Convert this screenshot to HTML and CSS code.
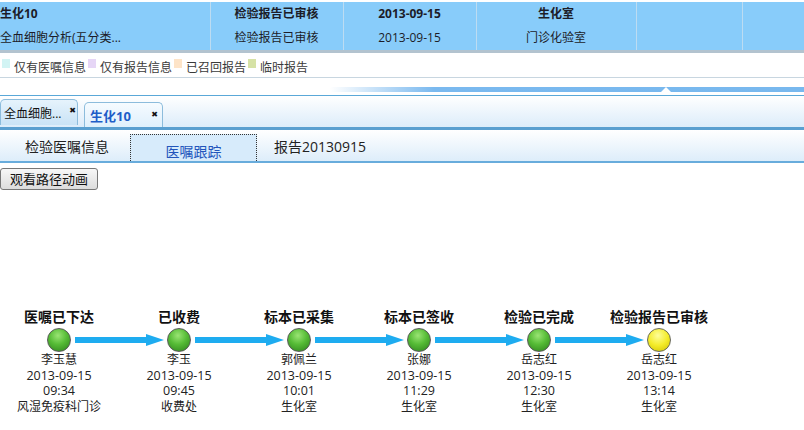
FILE: index.html
```html
<!DOCTYPE html>
<html lang="zh-CN">
<head>
<meta charset="utf-8">
<title>医嘱跟踪</title>
<link rel="stylesheet" href="styles.css">
</head>
<body>
<table class="rec">
  <colgroup>
    <col class="c1"><col class="c2"><col class="c3"><col class="c4"><col class="c5"><col class="c6">
  </colgroup>
  <tr class="bold">
    <td class="left">生化10</td><td>检验报告已审核</td><td>2013-09-15</td><td>生化室</td><td></td><td></td>
  </tr>
  <tr>
    <td class="left">全血细胞分析(五分类...</td><td>检验报告已审核</td><td>2013-09-15</td><td>门诊化验室</td><td></td><td></td>
  </tr>
</table>

<div class="legend">
  <span class="sw sw-cyan"></span><span class="lg">仅有医嘱信息</span>
  <span class="sw sw-lav"></span><span class="lg">仅有报告信息</span>
  <span class="sw sw-peach"></span><span class="lg">已召回报告</span>
  <span class="sw sw-green"></span><span class="lg">临时报告</span>
</div>

<div class="splitter">
  <div class="sbar"><span class="handle"></span></div>
</div>

<div class="tabs">
  <div class="tab"><span>全血细胞...</span><span class="x x-top">✖</span></div>
  <div class="tab active"><span>生化10</span><span class="x">✖</span></div>
</div>

<div class="subtabs">
  <div class="subtab">检验医嘱信息</div>
  <div class="subtab sel">医嘱跟踪</div>
  <div class="subtab">报告20130915</div>
</div>

<button class="btn" type="button">观看路径动画</button>

<div class="flow">
  <div class="titles">
    <div>医嘱已下达</div><div>已收费</div><div>标本已采集</div><div>标本已签收</div><div>检验已完成</div><div>检验报告已审核</div>
  </div>
  <div class="track">
    <span class="dot"></span>
    <svg class="arrow" width="89" height="12" viewBox="0 0 89 12"><rect x="0" y="3" width="73" height="6"/><polygon points="71,0 89,6 71,12"/></svg>
    <span class="dot"></span>
    <svg class="arrow" width="89" height="12" viewBox="0 0 89 12"><rect x="0" y="3" width="73" height="6"/><polygon points="71,0 89,6 71,12"/></svg>
    <span class="dot"></span>
    <svg class="arrow" width="89" height="12" viewBox="0 0 89 12"><rect x="0" y="3" width="73" height="6"/><polygon points="71,0 89,6 71,12"/></svg>
    <span class="dot"></span>
    <svg class="arrow" width="89" height="12" viewBox="0 0 89 12"><rect x="0" y="3" width="73" height="6"/><polygon points="71,0 89,6 71,12"/></svg>
    <span class="dot"></span>
    <svg class="arrow" width="89" height="12" viewBox="0 0 89 12"><rect x="0" y="3" width="73" height="6"/><polygon points="71,0 89,6 71,12"/></svg>
    <span class="dot yellow"></span>
  </div>
  <div class="infos">
    <div><div>李玉慧</div><div class="num">2013-09-15</div><div class="num">09:34</div><div>风湿免疫科门诊</div></div>
    <div><div>李玉</div><div class="num">2013-09-15</div><div class="num">09:45</div><div>收费处</div></div>
    <div><div>郭佩兰</div><div class="num">2013-09-15</div><div class="num">10:01</div><div>生化室</div></div>
    <div><div>张娜</div><div class="num">2013-09-15</div><div class="num">11:29</div><div>生化室</div></div>
    <div><div>岳志红</div><div class="num">2013-09-15</div><div class="num">12:30</div><div>生化室</div></div>
    <div><div>岳志红</div><div class="num">2013-09-15</div><div class="num">13:14</div><div>生化室</div></div>
  </div>
</div>
</body>
</html>
```

FILE: styles.css
```css
html, body {
  margin: 0;
  padding: 0;
  background: #fff;
}
body {
  width: 804px;
  height: 430px;
  overflow: hidden;
  font-family: "Open Sans", "Noto Sans CJK SC", sans-serif;
  font-size: 12px;
  color: #1e1e1e;
}

/* top record table */
.rec {
  border-collapse: collapse;
  table-layout: fixed;
  width: 804px;
  margin-top: 2px;
  background: #88ccfa;
  border-bottom: 3px solid #b3c3cf;
}
.c1 { width: 210px; }
.c2 { width: 133px; }
.c3 { width: 133px; }
.c4 { width: 160px; }
.c5 { width: 106px; }
.c6 { width: 62px; }
.rec td {
  height: 24px;
  padding: 0;
  line-height: 24px;
  text-align: center;
  white-space: nowrap;
  overflow: hidden;
  border-left: 1px solid #bcdcf2;
  color: #1c1c28;
}
.rec td.left {
  text-align: left;
  border-left: none;
}
.rec tr.bold td { font-weight: bold; }

/* legend */
.legend {
  height: 25px;
  box-sizing: border-box;
  padding: 7px 0 0 2px;
  border-bottom: 1px solid #c8d6e0;
  display: flex;
  align-items: flex-start;
}
.sw {
  width: 8px;
  height: 9px;
  margin: -1px 4px 0 0;
}
.sw-cyan { background: #d2f4f4; }
.sw-lav { background: #e6d6f6; }
.sw-peach { background: #fde4c8; }
.sw-green { background: #d6e2a6; }
.lg {
  line-height: 16px;
  color: #3a3a3a;
  margin-right: 2px;
}

/* splitter */
.splitter {
  height: 17px;
  padding-top: 9px;
  box-sizing: border-box;
}
.sbar {
  margin-left: 330px;
  height: 5px;
  background: linear-gradient(to right, rgba(120,184,240,0), #7ab9ef 22%, #78b8ee);
  display: flex;
  align-items: flex-end;
}
.handle {
  margin-left: 331px;
  width: 0;
  height: 0;
  border-left: 5px solid transparent;
  border-right: 5px solid transparent;
  border-bottom: 5px solid #fff;
}

/* outer tabs */
.tabs {
  height: 31px;
  border-top: 1px solid #5aa8d8;
  border-bottom: 3px solid #5a9fd0;
  background: linear-gradient(#ffffff, #dcecfa);
  display: flex;
  align-items: flex-end;
  gap: 6px;
}
.tab {
  width: 78px;
  height: 26px;
  margin-bottom: 2px;
  box-sizing: border-box;
  border: 1px solid #8cbcdc;
  border-bottom: none;
  border-radius: 5px 5px 0 0;
  background: linear-gradient(#e6f3fc, #c9e3f6);
  display: flex;
  justify-content: space-between;
  align-items: center;
  padding: 0 1px 0 3px;
  white-space: nowrap;
  font-size: 12px;
  color: #111;
}
.tab.active {
  width: 79px;
  height: 25px;
  margin-bottom: 0;
  background: linear-gradient(#f6fbff, #dff0fc);
  padding: 0 4px 0 5px;
  color: #1e5ec8;
  font-weight: bold;
  font-size: 13px;
}
.x {
  font-family: "DejaVu Sans", sans-serif;
  font-weight: bold;
  font-size: 8px;
  color: #111;
  line-height: 1;
}
.x-top { align-self: flex-start; margin-top: 7px; }

/* inner tabs */
.subtabs {
  height: 31px;
  border-bottom: 2px solid #68acdc;
  background: linear-gradient(#ffffff, #ddedfa);
  display: flex;
  align-items: flex-end;
  padding-left: 4px;
}
.subtab {
  width: 126px;
  height: 27px;
  box-sizing: border-box;
  line-height: 26px;
  text-align: center;
  font-size: 14px;
  color: #222;
  white-space: nowrap;
}
.subtab.sel {
  width: 127px;
  border: 1px dotted #333;
  border-bottom: none;
  background: #d7ebfb;
  color: #2255bb;
  line-height: 34px;
}

/* button */
.btn {
  display: block;
  margin: 5px 0 0 0;
  width: 98px;
  height: 22px;
  padding: 0;
  box-sizing: border-box;
  font-family: "Noto Sans CJK SC", sans-serif;
  font-size: 13px;
  color: #111;
  border: 1px solid #777;
  border-radius: 3px;
  background: linear-gradient(#f7f7f7, #dcdcdc);
  line-height: 18px;
}

/* flow diagram */
.flow {
  margin-top: 118px;
}
.titles, .infos {
  display: grid;
  grid-template-columns: repeat(6, 120px);
  margin-left: -1px;
  text-align: center;
  white-space: nowrap;
}
.titles {
  font-size: 14px;
  font-weight: bold;
  line-height: 18px;
  color: #111;
}
.track {
  margin-top: 2px;
  height: 24px;
  padding-left: 47px;
  display: flex;
  align-items: center;
}
.dot {
  width: 24px;
  height: 24px;
  flex: none;
  box-sizing: border-box;
  border-radius: 50%;
  border: 1.5px solid #5a5a5a;
  background: radial-gradient(circle at 45% 30%, #9ae474 0%, #56bc36 45%, #2c801c 100%);
}
.dot.yellow {
  background: radial-gradient(circle at 45% 30%, #fdfd9a 0%, #f4ec2a 50%, #cfc000 100%);
  border-color: #6a6a5a;
}
.arrow {
  flex: none;
  margin: 0 3px 0 4px;
  fill: #1eacf0;
}
.infos {
  font-size: 12px;
  line-height: 15.5px;
  color: #222;
}
.infos .num {
  font-size: 12.5px;
}
```
